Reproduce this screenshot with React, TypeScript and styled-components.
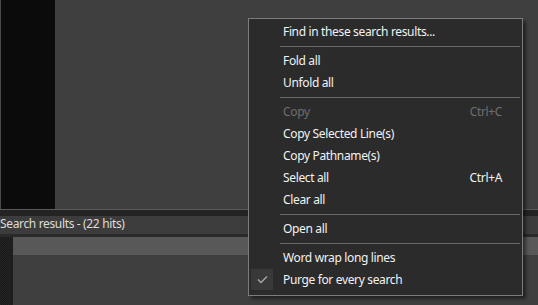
import React from "react";
import styled, {createGlobalStyle} from "styled-components";

const GlobalStyle = createGlobalStyle`
  html, body {
    margin: 0;
    padding: 0;
    background: #3f3f3f;
  }
  body {
    font-family: "Noto Sans", "Open Sans", sans-serif;
    font-size: 12px;
    letter-spacing: -0.35px;
  }
`;

const Page = styled.div`
  position: relative;
  width: 538px;
  height: 305px;
  overflow: hidden;
  display: flex;
  flex-direction: column;
  background: #3f3f3f;
`;

const EditorArea = styled.div`
  display: flex;
  height: 209px;
  border-bottom: 1px solid #5a5a5a;
`;

const LineGutter = styled.div`
  width: 54px;
  background: #0b0b0b;
  border-left: 1px solid #4a4a4a;
`;

const EditorBody = styled.div`
  flex: 1;
  background: #3f3f3f;
`;

const Band = styled.div<{ $h: number; $bg: string }>`
  height: ${p => p.$h}px;
  background: ${p => p.$bg};
`;

const PanelTitle = styled.div`
  height: 18px;
  line-height: 16px;
  background: #3c3c3c;
  color: #dcdcdc;
  white-space: nowrap;
`;

const Results = styled.div`
  flex: 1;
  display: flex;
`;

const ResultsGutter = styled.div`
  width: 13px;
  background-color: #1e1e1e;
  background-image: repeating-conic-gradient(#232323 0 25%, #1a1a1a 0 50%);
  background-size: 2px 2px;
`;

const ResultsList = styled.div`
  flex: 1;
  display: flex;
  flex-direction: column;
`;

const ResultRow = styled.div<{ $active?: boolean }>`
  height: 18px;
  background: ${p => (p.$active ? "#585858" : "transparent")};
`;

const Menu = styled.div`
  position: absolute;
  left: 248px;
  top: 18px;
  width: 273px;
  height: 274px;
  box-sizing: content-box;
  background: #2b2b2b;
  border: 1px solid #7c7c7c;
  box-shadow: 3px 3px 3px rgba(0, 0, 0, 0.45);
  padding: 2px 0 0;
  display: flex;
  flex-direction: column;
  color: #f2f2f2;
`;

const Item = styled.div<{ $disabled?: boolean }>`
  height: 22px;
  box-sizing: border-box;
  display: flex;
  align-items: center;
  padding: 0 20px 1px 2px;
  color: ${p => (p.$disabled ? "#6e6e6e" : "#f2f2f2")};
  white-space: nowrap;
`;

const CheckBox = styled.div<{ $on?: boolean }>`
  width: 22px;
  height: 21px;
  margin-right: 10px;
  display: flex;
  align-items: center;
  justify-content: center;
  background: ${p => (p.$on ? "#393939" : "transparent")};
`;

const Label = styled.span`
  flex: 1;
`;

const Shortcut = styled.span`
  margin-left: 20px;
`;

const Separator = styled.div`
  height: 1px;
  margin: 3px 2px 3px 31px;
  background: #6a6a6a;
`;

type Entry =
  | { sep: true }
  | { label: string; shortcut?: string; disabled?: boolean; checked?: boolean };

const entries: Entry[] = [
  {label: "Find in these search results..."},
  {sep: true},
  {label: "Fold all"},
  {label: "Unfold all"},
  {sep: true},
  {label: "Copy", shortcut: "Ctrl+C", disabled: true},
  {label: "Copy Selected Line(s)"},
  {label: "Copy Pathname(s)"},
  {label: "Select all", shortcut: "Ctrl+A"},
  {label: "Clear all"},
  {sep: true},
  {label: "Open all"},
  {sep: true},
  {label: "Word wrap long lines"},
  {label: "Purge for every search", checked: true},
];

function Check() {
  return (
    <svg width="11" height="9" viewBox="0 0 11 9">
      <polyline points="1,4.5 4,7.5 10,1.5" fill="none" stroke="#a8a8a8" strokeWidth="1.4"/>
    </svg>
  );
}

export default function App() {
  return (
    <Page>
      <GlobalStyle/>
      <EditorArea>
        <LineGutter/>
        <EditorBody/>
      </EditorArea>
      <Band $h={6} $bg="#232323"/>
      <PanelTitle>Search results - (22 hits)</PanelTitle>
      <Band $h={3} $bg="#2a2a2a"/>
      <Results>
        <ResultsGutter/>
        <ResultsList>
          <ResultRow $active/>
        </ResultsList>
      </Results>

      <Menu>
        {entries.map((e, i) => {
          if ("sep" in e) return <Separator key={i}/>;
          return (
            <Item key={i} $disabled={e.disabled}>
              <CheckBox $on={e.checked}>{e.checked && <Check/>}</CheckBox>
              <Label>{e.label}</Label>
              {e.shortcut && <Shortcut>{e.shortcut}</Shortcut>}
            </Item>
          );
        })}
      </Menu>
    </Page>
  );
}
